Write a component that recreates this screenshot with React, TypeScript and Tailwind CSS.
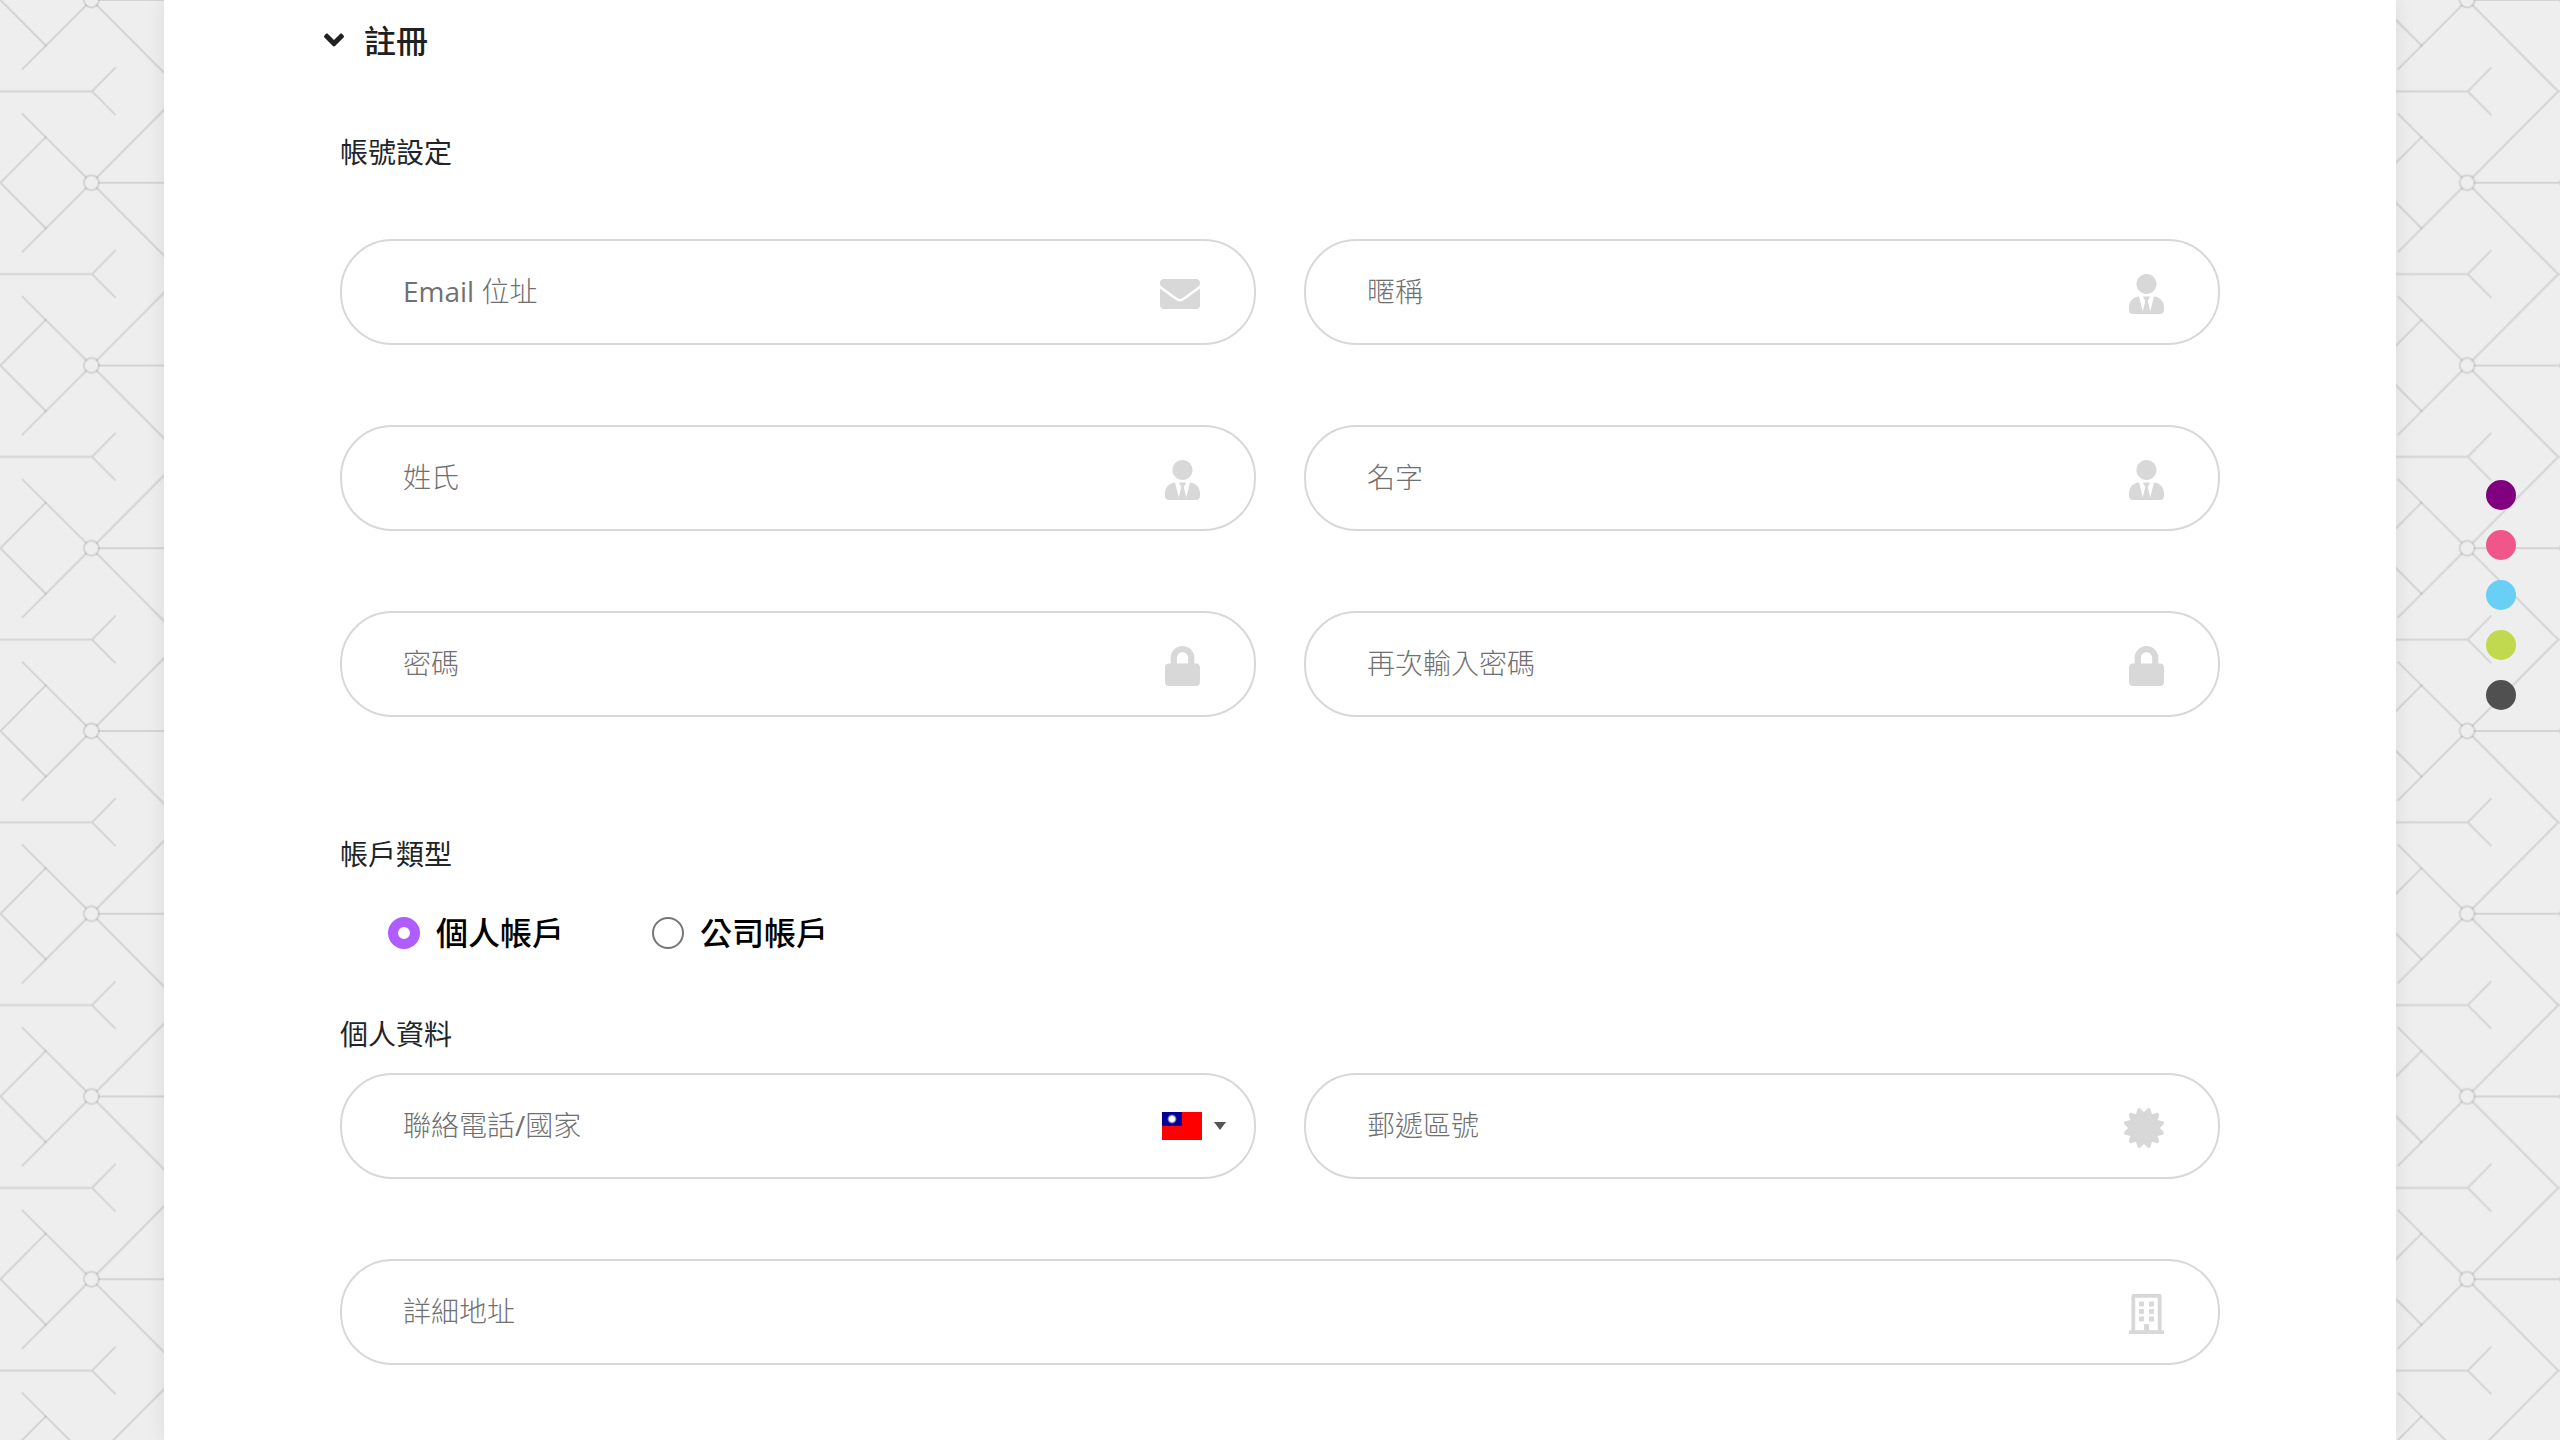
import { useState } from "react";
import type { ReactNode } from "react";
import {
  FaAngleDown,
  FaCertificate,
  FaEnvelope,
  FaLock,
  FaRegBuilding,
  FaUserTie,
} from "react-icons/fa";

const icons = {
  mail: { Icon: FaEnvelope, width: "w-10" },
  user: { Icon: FaUserTie, width: "w-[35px]" },
  lock: { Icon: FaLock, width: "w-[35px]" },
  badge: { Icon: FaCertificate, width: "w-10" },
  building: { Icon: FaRegBuilding, width: "w-[35px]" },
};

function Field({
  label,
  icon,
  type = "text",
  children,
}: {
  label: string;
  icon?: keyof typeof icons;
  type?: string;
  children?: ReactNode;
}) {
  const glyph = icon ? icons[icon] : null;
  return (
    <div className="flex h-[106px] items-center rounded-[52px] border-2 border-[#d8d8d8] bg-white pr-[54px] pl-[61px] focus-within:border-[#b05cff]">
      <input
        type={type}
        aria-label={label}
        placeholder={label}
        className="h-full min-w-0 flex-1 bg-transparent pb-0.5 font-['Open_Sans','Noto_Sans_CJK_TC_Light','Noto_Sans_CJK_TC',sans-serif] text-[28px] text-[#212529] outline-none placeholder:text-[#707070]"
      />
      {glyph && (
        <glyph.Icon
          className={`mt-1 h-10 shrink-0 text-[#d8d8d8] ${glyph.width}`}
          aria-hidden="true"
        />
      )}
      {children}
    </div>
  );
}

function CountryButton() {
  return (
    <button type="button" aria-label="Taiwan" className="-mr-[26px] flex items-center gap-3">
      <svg width="40" height="28" viewBox="0 0 40 28" aria-hidden="true">
        <defs>
          <radialGradient id="sun">
            <stop offset="0.5" stopColor="#fff" />
            <stop offset="1" stopColor="#fff" stopOpacity="0" />
          </radialGradient>
        </defs>
        <rect width="40" height="28" fill="#f00" />
        <rect width="20" height="14" fill="#000095" />
        <circle cx="10" cy="7" r="5" fill="url(#sun)" />
      </svg>
      <svg width="12" height="8" viewBox="0 0 12 8" aria-hidden="true">
        <path d="M0 0h12L6 8z" fill="#555" />
      </svg>
    </button>
  );
}

function SectionTitle({ children }: { children: ReactNode }) {
  return <h3 className="text-[28px] leading-10 text-[#212529]">{children}</h3>;
}

function AccountRadio({
  label,
  checked,
  onChange,
}: {
  label: string;
  checked: boolean;
  onChange: () => void;
}) {
  return (
    <label className="flex cursor-pointer items-center gap-4 text-[32px] leading-10 font-medium text-black">
      <input
        type="radio"
        name="account"
        checked={checked}
        onChange={onChange}
        className="size-8 shrink-0 appearance-none rounded-full border-2 border-[#767676] bg-white checked:border-[10px] checked:border-[#b05cff]"
      />
      {label}
    </label>
  );
}

function Backdrop() {
  return (
    <svg className="absolute inset-0 h-full w-full" aria-hidden="true">
      <defs>
        <pattern id="lattice" width="182.75" height="182.75" patternUnits="userSpaceOnUse">
          <g fill="none" stroke="#000" strokeOpacity="0.11" strokeWidth="2" strokeLinecap="round">
            <circle cx="91.4" cy="0" r="7.5" />
            <circle cx="91.4" cy="182.75" r="7.5" />
            <path d="M99 0H182.75M99 182.75H182.75" />
            <path d="M97 5.5L182.5 91.4L97 177.3" />
            <path d="M86 5.5L22.5 69M86 177.3L22.5 114" />
            <path d="M0.5 0L45.7 45.5M45.7 137.2L0.5 182.75" />
            <path d="M0 91.4H92M115 68L92 91.4L115 114.5" />
          </g>
        </pattern>
      </defs>
      <rect width="100%" height="100%" fill="url(#lattice)" />
    </svg>
  );
}

const themes = [
  { name: "purple", color: "bg-[#800080]" },
  { name: "pink", color: "bg-[#f0568a]" },
  { name: "blue", color: "bg-[#69cff4]" },
  { name: "green", color: "bg-[#c0d94f]" },
  { name: "gray", color: "bg-[#505050]" },
];

export default function App() {
  const [account, setAccount] = useState("personal");

  return (
    <div className="relative min-h-screen bg-[#eee] font-['Open_Sans','Noto_Sans_CJK_TC',sans-serif]">
      <Backdrop />
      <main className="relative mx-[164px] min-h-screen bg-white pt-[17px] pb-[74px] shadow-[0_0_20px_rgba(0,0,0,0.08)]">
        <h2 className="px-[154px]">
          <button
            type="button"
            aria-expanded="true"
            className="flex items-center gap-[14px] text-[32px] leading-[48px] font-medium text-[#212121]"
          >
            <FaAngleDown className="mb-0.5 size-8" aria-hidden="true" />
            註冊
          </button>
        </h2>

        <form className="px-44 pt-[67px]">
          <SectionTitle>帳號設定</SectionTitle>
          <div className="mt-[67px] grid grid-cols-2 gap-x-12 gap-y-20">
            <Field label="Email 位址" icon="mail" type="email" />
            <Field label="暱稱" icon="user" />
            <Field label="姓氏" icon="user" />
            <Field label="名字" icon="user" />
            <Field label="密碼" icon="lock" type="password" />
            <Field label="再次輸入密碼" icon="lock" type="password" />
          </div>

          <div className="mt-[117px]">
            <SectionTitle>帳戶類型</SectionTitle>
            <div className="mt-[39px] flex gap-[88px] pl-12">
              <AccountRadio
                label="個人帳戶"
                checked={account === "personal"}
                onChange={() => setAccount("personal")}
              />
              <AccountRadio
                label="公司帳戶"
                checked={account === "company"}
                onChange={() => setAccount("company")}
              />
            </div>
          </div>

          <div className="mt-[61px]">
            <SectionTitle>個人資料</SectionTitle>
            <div className="mt-[19px] grid grid-cols-2 gap-x-12 gap-y-20">
              <Field label="聯絡電話/國家" type="tel">
                <CountryButton />
              </Field>
              <Field label="郵遞區號" icon="badge" />
              <div className="col-span-2">
                <Field label="詳細地址" icon="building" />
              </div>
            </div>
          </div>
        </form>
      </main>

      <nav aria-label="Theme" className="fixed top-[480px] right-11 flex flex-col gap-5">
        {themes.map((t) => (
          <button
            key={t.name}
            type="button"
            aria-label={t.name}
            className={`size-[30px] rounded-full ${t.color}`}
          />
        ))}
      </nav>
    </div>
  );
}
